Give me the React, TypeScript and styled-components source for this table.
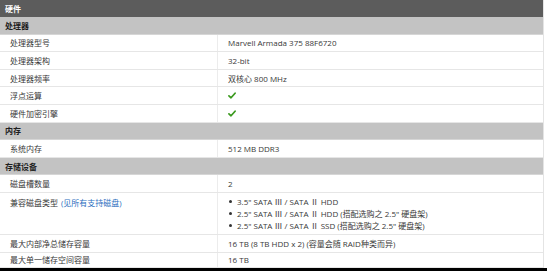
import React from "react";
import styled, { createGlobalStyle } from "styled-components";

const GlobalStyle = createGlobalStyle`
  html, body {
    margin: 0;
    padding: 0;
    background: #ffffff;
  }
  body {
    font-family: "Open Sans", "Noto Sans CJK SC", sans-serif;
    font-size: 8px;
    color: #383838;
  }
`;

const Page = styled.div`
  width: 547px;
  height: 271px;
  overflow: hidden;
  display: flex;
  flex-direction: column;
`;

const Table = styled.div`
  width: 544px;
  border-right: 1px solid #e4e4e4;
  box-sizing: border-box;
  display: flex;
  flex-direction: column;
`;

const TitleBar = styled.div`
  height: 17px;
  background: #5c5c5c;
  color: #ffffff;
  font-weight: 700;
  display: flex;
  align-items: center;
  padding-left: 5px;
`;

const SectionBar = styled.div`
  height: 17.6px;
  box-sizing: border-box;
  background: #c3c3c3;
  border-bottom: 1px solid #d6d6d6;
  color: #1e1e1e;
  font-weight: 700;
  display: flex;
  align-items: center;
  padding-left: 5px;
`;

const Row = styled.div<{ $h?: number }>`
  height: ${(p) => p.$h ?? 17.6}px;
  box-sizing: border-box;
  display: grid;
  grid-template-columns: 218px 1fr;
  border-bottom: 1px solid #e6e6e6;
  background: #ffffff;
`;

const Label = styled.div<{ $top?: boolean }>`
  padding-left: 10px;
  display: flex;
  align-items: ${(p) => (p.$top ? "flex-start" : "center")};
  padding-top: ${(p) => (p.$top ? "4px" : "0")};
  border-right: 1px solid #ececec;
`;

const Value = styled.div`
  padding-left: 10px;
  display: flex;
  align-items: center;
`;

const Link = styled.a`
  color: #2c6fc0;
  text-decoration: none;
  margin-left: 3px;
`;

const List = styled.ul`
  margin: 0;
  padding: 3px 0 0 10px;
  list-style: none;
  display: flex;
  flex-direction: column;
`;

const Item = styled.li`
  height: 12px;
  display: flex;
  align-items: center;
  white-space: pre;
  &::before {
    content: "";
    width: 3px;
    height: 3px;
    border-radius: 50%;
    background: #333333;
    margin: 0 5px 0 1px;
  }
`;

const Roman = styled.span`
  font-family: "Noto Sans CJK SC", sans-serif;
`;

const FootBar = styled.div`
  flex: 1;
  background: #000000;
`;

const Check = () => (
  <svg width="8" height="7" viewBox="0 0 9 8">
    <path d="M1 4.4 L3.4 6.6 L8 1.4" fill="none" stroke="#3b9a1f" strokeWidth="2" strokeLinecap="round" strokeLinejoin="round" />
  </svg>
);

type Spec = { label: string; value: React.ReactNode };

const cpu: Spec[] = [
  { label: "处理器型号", value: "Marvell Armada 375 88F6720" },
  { label: "处理器架构", value: "32-bit" },
  { label: "处理器频率", value: "双核心 800 MHz" },
  { label: "浮点运算", value: <Check /> },
  { label: "硬件加密引擎", value: <Check /> },
];

const drives = [
  ["3.5", "HDD", ""],
  ["2.5", "HDD", ' (搭配选购之 2.5" 硬盘架)'],
  ["2.5", "SSD", ' (搭配选购之 2.5" 硬盘架)'],
];

function SpecRow({ label, value }: Spec) {
  return (
    <Row>
      <Label>{label}</Label>
      <Value>{value}</Value>
    </Row>
  );
}

export default function App() {
  return (
    <>
      <GlobalStyle />
      <Page>
        <Table>
          <TitleBar>硬件</TitleBar>
          <SectionBar>处理器</SectionBar>
          {cpu.map((s) => (
            <SpecRow key={s.label} {...s} />
          ))}
          <SectionBar>内存</SectionBar>
          <SpecRow label="系统内存" value="512 MB DDR3" />
          <SectionBar>存储设备</SectionBar>
          <SpecRow label="磁盘槽数量" value="2" />
          <Row $h={42}>
            <Label $top>
              兼容磁盘类型<Link href="#">(见所有支持磁盘)</Link>
            </Label>
            <List>
              {drives.map(([size, kind, note], i) => (
                <Item key={i}>
                  {size}" SATA <Roman>Ⅲ</Roman> / SATA Ⅱ {kind}
                  {note}
                </Item>
              ))}
            </List>
          </Row>
          <SpecRow label="最大内部净总储存容量" value="16 TB (8 TB HDD x 2) (容量会随 RAID种类而异)" />
          <Row $h={15}>
            <Label>最大单一储存空间容量</Label>
            <Value>16 TB</Value>
          </Row>
        </Table>
        <FootBar />
      </Page>
    </>
  );
}
